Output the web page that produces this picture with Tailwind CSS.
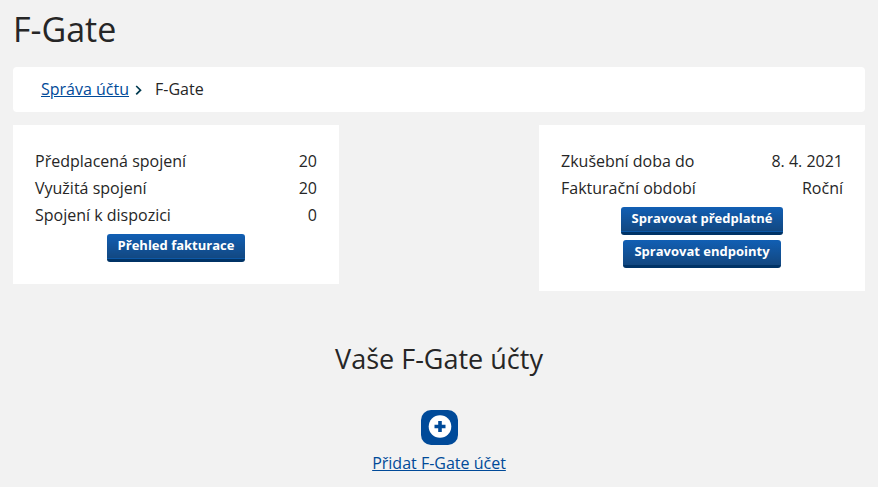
<!DOCTYPE html>
<html lang="cs">
<head>
<meta charset="utf-8">
<meta name="viewport" content="width=device-width, initial-scale=1">
<title>F-Gate</title>
<script src="https://cdn.jsdelivr.net/npm/@tailwindcss/browser@4"></script>
</head>
<body class="min-h-screen bg-[#f2f2f2] px-[13px] pt-2 font-['Open_Sans',sans-serif] text-base text-[#262626]">
<h1 class="text-[34px] leading-[42px]">F-Gate</h1>
<nav aria-label="Drobečková navigace" class="mt-[17px] flex h-[45px] items-center rounded bg-white px-7 pb-[2px]">
  <a href="#" class="text-[#004a99] underline">Správa účtu</a>
  <svg class="mt-[3px] ml-[6px] h-3 w-2" viewBox="0 0 8 12" fill="none" stroke="#003a50" stroke-width="1.7" aria-hidden="true"><path d="M1.2 2 5.5 6.2 1.2 10.4"/></svg>
  <span class="ml-3">F-Gate</span>
</nav>
<main>
  <div class="mt-[13px] flex items-start justify-between">
    <section class="w-[326px] bg-white px-[22px] pt-[23px] pb-[22px] leading-[27px]">
      <dl>
        <div class="flex justify-between"><dt>Předplacená spojení</dt><dd>20</dd></div>
        <div class="flex justify-between"><dt>Využitá spojení</dt><dd>20</dd></div>
        <div class="flex justify-between"><dt>Spojení k dispozici</dt><dd>0</dd></div>
      </dl>
      <div class="mt-[5px] flex flex-col items-center gap-[5px]">
        <button class="h-7 rounded-[3px] border-b-3 border-[#003366] bg-linear-to-b from-[#115fb4] to-[#124780] px-[11px] pb-[2px] text-[13px] leading-[23px] font-bold text-white shadow-[inset_0_-1px_0_#0d58a6]">Přehled fakturace</button>
      </div>
    </section>
    <section class="w-[326px] bg-white px-[22px] pt-[23px] pb-[23px] leading-[27px]">
      <dl>
        <div class="flex justify-between"><dt>Zkušební doba do</dt><dd>8. 4. 2021</dd></div>
        <div class="flex justify-between"><dt>Fakturační období</dt><dd>Roční</dd></div>
      </dl>
      <div class="mt-[5px] flex flex-col items-center gap-[5px]">
        <button class="h-7 rounded-[3px] border-b-3 border-[#003366] bg-linear-to-b from-[#115fb4] to-[#124780] px-[11px] pb-[2px] text-[13px] leading-[23px] font-bold text-white shadow-[inset_0_-1px_0_#0d58a6]">Spravovat předplatné</button>
        <button class="h-7 rounded-[3px] border-b-3 border-[#003366] bg-linear-to-b from-[#115fb4] to-[#124780] px-[11px] pb-[2px] text-[13px] leading-[23px] font-bold text-white">Spravovat endpointy</button>
      </div>
    </section>
  </div>
  <h2 class="mt-[50px] text-center text-[27px] leading-9">Vaše F-Gate účty</h2>
  <a href="#" class="mx-auto mt-[33px] flex w-fit flex-col items-center text-[#004a99] underline">
    <svg class="h-[35px] w-[37px]" viewBox="0 0 37 35" aria-hidden="true"><rect width="37" height="35" rx="10" fill="#004a99"/><circle cx="19" cy="16.5" r="11.3" fill="#fff"/><path d="M19 11v11M13.5 16.5h11" stroke="#004a99" stroke-width="3.6"/></svg>
    <span class="mt-[6px]">Přidat F-Gate účet</span>
  </a>
</main>
</body>
</html>
